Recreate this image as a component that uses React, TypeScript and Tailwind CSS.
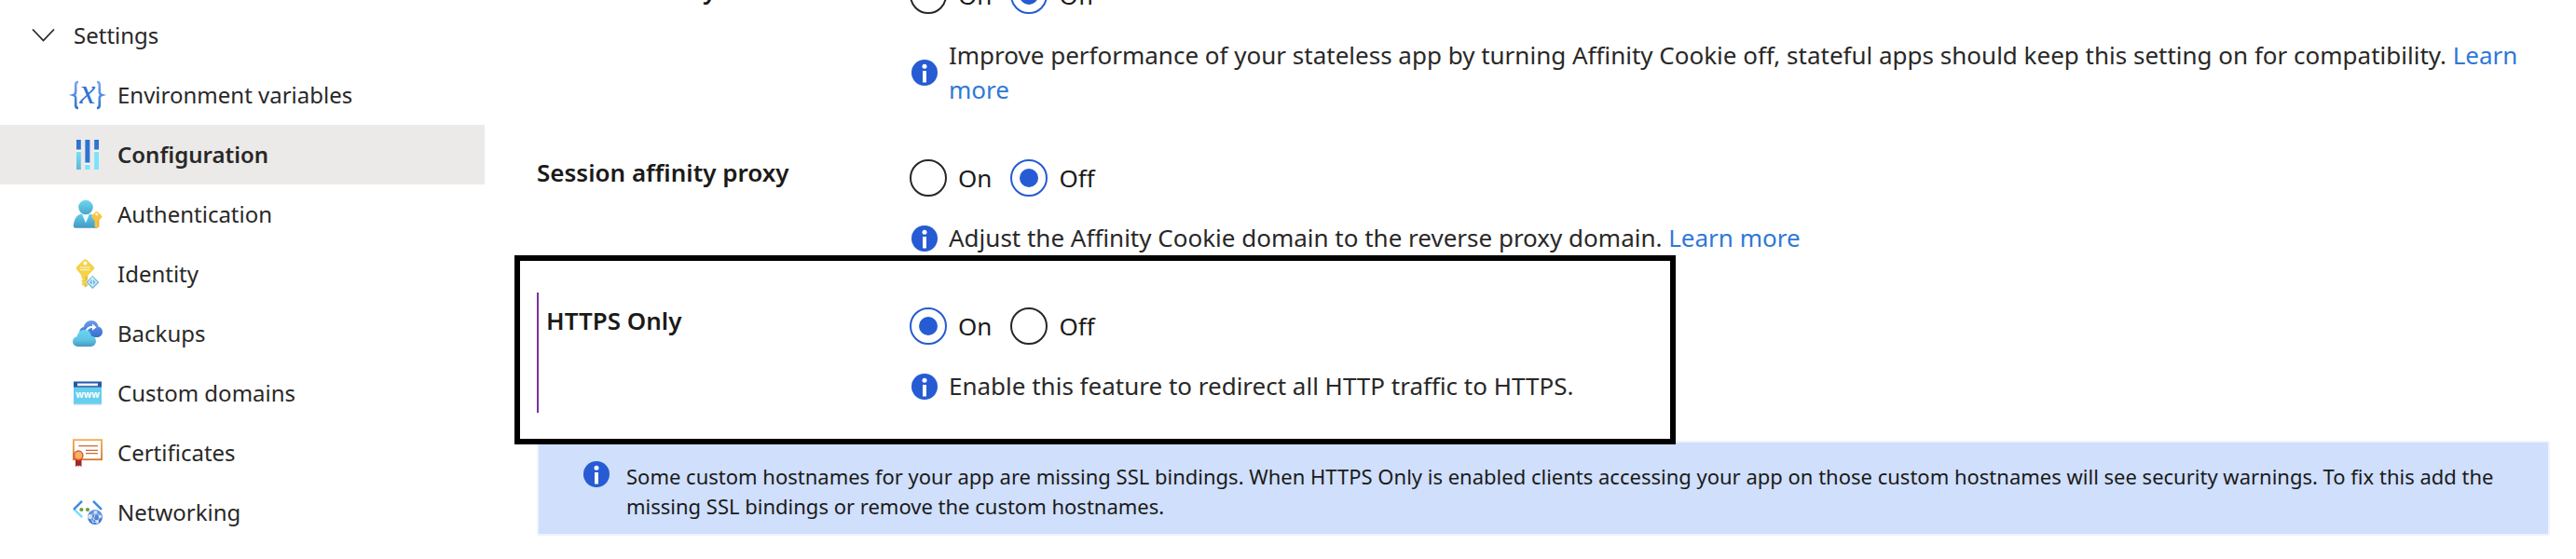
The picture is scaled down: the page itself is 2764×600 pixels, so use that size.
import type { ReactNode } from "react";

function EnvironmentIcon() {
  return (
    <svg viewBox="0 0 32 32" className="size-8 shrink-0 overflow-visible" aria-hidden="true">
      <defs>
        <linearGradient id="env-g" x1="0" y1="0" x2="0" y2="1">
          <stop offset="0" stopColor="#7ba7f0" />
          <stop offset="1" stopColor="#2f74d0" />
        </linearGradient>
      </defs>
      <g fill="none" stroke="url(#env-g)" strokeWidth="2.6">
        <path d="M6 2C3.600 2 3.200 3 3.200 5v7.500c0 2-.6 3-2.400 3.500 1.800.5 2.400 1.500 2.400 3.500V27c0 2 .4 3 2.800 3" />
        <path d="M26 2c2.400 0 2.800 1 2.800 3v7.500c0 2 .6 3 2.400 3.500-1.800.5-2.400 1.500-2.400 3.500V27c0 2-.4 3-2.800 3" />
      </g>
      <text x="16" y="25" textAnchor="middle" fill="#2f74d0" className="font-['Liberation_Serif',serif] text-[38px] italic">x</text>
    </svg>
  );
}

function ConfigurationIcon() {
  return (
    <svg viewBox="0 0 32 32" className="size-8 shrink-0" aria-hidden="true">
      <defs>
        <linearGradient id="cfg-g" x1="0" y1="0" x2="0" y2="1">
          <stop offset="0" stopColor="#76dff8" />
          <stop offset="1" stopColor="#5fb6d4" />
        </linearGradient>
      </defs>
      <path fill="#2f74cf" d="M4 0h4.800v10.700H4zM13.400 0h5v24.700h-5zM23.200 0H28v10.700h-4.800z" />
      <path fill="url(#cfg-g)" d="M4 13h4.800v19H4z" />
      <path fill="#7ae2fb" d="M13.400 27h5v5h-5zM23.200 13H28v19h-4.800z" />
      <path fill="#f7f9fb" d="M4 10.700h4.800V13H4zM23.200 10.700H28V13h-4.800zM13.400 24.700h5V27h-5z" />
    </svg>
  );
}

function AuthenticationIcon() {
  return (
    <svg viewBox="0 0 32 32" className="size-8 shrink-0" aria-hidden="true">
      <defs>
        <linearGradient id="auth-b" x1="0" y1="0" x2="0" y2="1">
          <stop offset="0" stopColor="#63cce9" />
          <stop offset="1" stopColor="#4499c4" />
        </linearGradient>
        <linearGradient id="auth-h" x1="0" y1="0" x2="0" y2="1">
          <stop offset="0" stopColor="#6fd8f2" />
          <stop offset="1" stopColor="#48a4cc" />
        </linearGradient>
      </defs>
      <path fill="url(#auth-b)" d="M3 30.700c-1.600 0-2.400-1-2.200-2.600C1.700 21 4.500 15.700 10 15.700h8c5.500 0 8.300 5.300 9.200 12.400.2 1.600-.7 2.600-2.200 2.600z" />
      <path fill="#eaf8fd" d="M10 15.700h8l-4 9.800z" />
      <circle cx="14" cy="8.500" r="7.800" fill="url(#auth-h)" />
      <path fill="#f9c440" d="M24.600 13.600q1.200-1 2.400 0l3.900 3.700q1 1.200 0 2.400l-2.700 3v6.600l-2.300 1.900-2.300-1.900v-6.600l-2.800-3q-1-1.200 0-2.400z" />
      <path fill="#eea634" d="M26.800 22.500h1.400v6.800l-1.400 1.200z" />
      <circle cx="25.800" cy="16" r="1.500" fill="#fff5dc" />
    </svg>
  );
}

function IdentityIcon() {
  return (
    <svg viewBox="0 0 32 32" className="size-8 shrink-0" aria-hidden="true">
      <path fill="#f5d24a" d="M12 .8q1.500-1.200 3 0l7.600 7.400q1.300 1.500 0 3l-6.300 6.600-.3 10.400-2.200 2.200-4.500-3.400 1.500-1.700-1.600-1.800 1.700-1.800-1.600-1.700V17.500L4.300 11.200q-1.200-1.500 0-3z" />
      <path fill="#f0bb3a" d="M13.400 18.500H16v9.800l-2.600 2z" />
      <circle cx="13.400" cy="4.500" r="2" fill="#fff" />
      <path stroke="#fbf0bd" strokeWidth="1.200" d="M8 9.200h10.600M8 11.700h10.600" />
      <path fill="#74b9de" stroke="#fff" strokeWidth=".8" d="m21.300 17.400 7.500 7.600-7.500 7.500-7.500-7.500z" />
      <path fill="none" stroke="#d5f1fb" strokeWidth="1.200" d="m21.300 20-4.300 5 4.300 4.200 4.300-4.200zM21.300 20v9" />
    </svg>
  );
}

function BackupsIcon() {
  return (
    <svg viewBox="0 0 32 32" className="size-8 shrink-0" aria-hidden="true">
      <defs>
        <linearGradient id="bk-1" x1="0" y1="0" x2="0" y2="1">
          <stop offset="0" stopColor="#6d9bea" />
          <stop offset="1" stopColor="#3270cf" />
        </linearGradient>
        <linearGradient id="bk-2" x1="0" y1="0" x2="0" y2="1">
          <stop offset="0" stopColor="#69d6f2" />
          <stop offset=".6" stopColor="#5fc4e4" />
          <stop offset="1" stopColor="#4598c0" />
        </linearGradient>
      </defs>
      <path fill="url(#bk-1)" d="M14 20c-4 0-6.700-2.500-6.700-5.600 0-2.800 2-5 4.600-5.400C12.700 4.800 16 2 20 2c4 0 7 2.800 7.500 6.600 2.700.4 4.500 2.800 4.500 5.600 0 3.200-2.500 5.800-5.600 5.800z" />
      <path fill="none" stroke="#fff" strokeWidth="2.200" d="M14.700 14c.6-3.600 3-5.200 7-5" />
      <path fill="#fff" d="m21 5.500 4.600 3.700-4.600 3.600z" />
      <path fill="url(#bk-2)" d="M5.600 30C2.400 30 0 27.500 0 24.600c0-2.900 2-5.100 4.700-5.400C5.200 15.200 8.300 12 12.500 12c4 0 7 2.800 7.500 6.500 2.900.2 5 2.700 5 5.600 0 3.200-2.500 5.900-5.700 5.900z" />
    </svg>
  );
}

function DomainsIcon() {
  return (
    <svg viewBox="0 0 32 32" className="size-8 shrink-0" aria-hidden="true">
      <path fill="#66cfee" d="M1 9.500h30V28H1z" />
      <path fill="#225ba8" d="M1 3.500h30v6.200H1z" />
      <path fill="#f3f3f3" d="M5 5.500h22v2.700H5z" />
      <path fill="#b9d8e6" d="M1 27.400h30v1.200H1z" />
      <text x="16" y="21" textAnchor="middle" fill="#fff" className="font-['Open_Sans',sans-serif] text-[10px] font-bold">www</text>
    </svg>
  );
}

function CertificatesIcon() {
  return (
    <svg viewBox="0 0 32 32" className="size-8 shrink-0" aria-hidden="true">
      <defs>
        <linearGradient id="ct-g" x1="0" y1="0" x2="0" y2="1">
          <stop offset="0" stopColor="#f2a94a" />
          <stop offset="1" stopColor="#d27a2c" />
        </linearGradient>
      </defs>
      <rect x=".9" y="2.200" width="30.200" height="21" fill="#fff" stroke="url(#ct-g)" strokeWidth="1.800" />
      <path stroke="#c96a33" strokeWidth="1.100" d="M6.300 8.600H27M14 13.400h13M14 16.600h13" />
      <path fill="#a32722" d="M3 22.500h6.500V31l-2.300-1.600L6.200 31l-1-1.600L3 31z" />
      <circle cx="6.200" cy="18.800" r="4.700" fill="#f5b45c" stroke="#e2533d" strokeWidth="1.500" />
    </svg>
  );
}

function NetworkingIcon() {
  return (
    <svg viewBox="0 0 32 32" className="size-8 shrink-0" aria-hidden="true">
      <defs>
        <linearGradient id="nw-g" x1="0" y1="0" x2="0" y2="1">
          <stop offset="0" stopColor="#6a9ce8" />
          <stop offset="1" stopColor="#2f6fcf" />
        </linearGradient>
      </defs>
      <g fill="none" strokeWidth="2.500">
        <path stroke="#79e0fb" d="m1.200 12.300 9 8.900" />
        <path stroke="#3f8bdc" d="m10 3.800-9 9M22 3.800l9 9" />
      </g>
      <circle cx="9.400" cy="13" r="2.100" fill="#6d9d3a" />
      <circle cx="16" cy="13" r="2.100" fill="#6d9d3a" />
      <circle cx="24" cy="21" r="8" fill="url(#nw-g)" />
      <path fill="none" stroke="#dfe6f2" strokeWidth=".8" d="m18.500 20 6-4 5 4-3 6-5 1-3-7 8 6M24.500 16l-3 11" />
      <g fill="#dcdfe4">
        <circle cx="24.500" cy="15.800" r="1.900" />
        <circle cx="18.600" cy="20.500" r="2.500" />
        <circle cx="29.400" cy="20.400" r="1.800" />
        <circle cx="26.200" cy="26" r="1.900" />
      </g>
    </svg>
  );
}

function InfoIcon() {
  return (
    <svg viewBox="0 0 28 28" className="size-7 shrink-0" aria-hidden="true">
      <circle cx="14" cy="14" r="14" fill="#265bd3" />
      <circle cx="14" cy="7.200" r="2.500" fill="#fff" />
      <path fill="#fff" d="M12 12h4v12.500h-4z" />
    </svg>
  );
}

const navItems: { label: string; icon: ReactNode; active?: boolean }[] = [
  { label: "Environment variables", icon: <EnvironmentIcon /> },
  { label: "Configuration", icon: <ConfigurationIcon />, active: true },
  { label: "Authentication", icon: <AuthenticationIcon /> },
  { label: "Identity", icon: <IdentityIcon /> },
  { label: "Backups", icon: <BackupsIcon /> },
  { label: "Custom domains", icon: <DomainsIcon /> },
  { label: "Certificates", icon: <CertificatesIcon /> },
  { label: "Networking", icon: <NetworkingIcon /> },
];

function Radio({ name, label, checked }: { name: string; label: string; checked: boolean }) {
  return (
    <label className="flex h-10 items-center gap-3">
      <input
        type="radio"
        name={name}
        defaultChecked={checked}
        className="grid size-10 shrink-0 appearance-none place-content-center rounded-full border-2 border-[#292827] bg-white before:size-5 before:rounded-full before:content-[''] checked:border-[#265bd3] checked:before:bg-[#265bd3]"
      />
      {label}
    </label>
  );
}

function Setting({ id, label, value, children }: { id: string; label: string; value: "On" | "Off"; children: ReactNode }) {
  return (
    <div role="radiogroup" aria-labelledby={id} className="flex flex-1 items-start">
      <h3 id={id} className="flex-1 leading-7 font-semibold text-[#1b1a19]">{label}</h3>
      <div className="flex w-[1760px] flex-col gap-[26px]">
        <div className="flex gap-5 text-[#1b1a19]">
          <Radio name={id} label="On" checked={value === "On"} />
          <Radio name={id} label="Off" checked={value === "Off"} />
        </div>
        <div className="flex items-center gap-3 pl-0.5">
          <InfoIcon />
          <p>{children}</p>
        </div>
      </div>
    </div>
  );
}

function LearnMore() {
  return <a href="#learn-more" className="text-[#2f78d6]">Learn more</a>;
}

export default function App() {
  return (
    <div className="flex min-h-screen overflow-hidden bg-white font-['Noto_Sans','Open_Sans',sans-serif] text-[26px] leading-[37px] text-[#292827]">
      <nav aria-label="Settings" className="w-[520px] shrink-0 pt-1.5 text-2xl">
        <button type="button" aria-expanded="true" className="flex h-16 w-full items-center gap-5 pl-[34px]">
          <svg viewBox="0 0 25 16" className="h-4 w-[25px]" aria-hidden="true">
            <path d="m1 1.500 11.500 12L24 1.500" fill="none" stroke="#292827" strokeWidth="1.800" />
          </svg>
          Settings
        </button>
        <ul>
          {navItems.map((item) => (
            <li key={item.label}>
              <a
                href="#settings"
                aria-current={item.active ? "page" : undefined}
                className={
                  item.active
                    ? "flex h-16 items-center gap-4 bg-[#ebeae9] pl-[78px] font-semibold"
                    : "flex h-16 items-center gap-4 pl-[78px]"
                }
              >
                {item.icon}
                {item.label}
              </a>
            </li>
          ))}
        </ul>
      </nav>

      <main className="-mt-[25px] min-w-0 flex-1 pr-7 pl-14">
        <div className="flex flex-col gap-14">
          <Setting id="session-affinity" label="Session affinity" value="Off">
            Improve performance of your stateless app by turning Affinity Cookie off, stateful apps should keep this
            setting on for compatibility. <LearnMore />
          </Setting>
          <Setting id="affinity-proxy" label="Session affinity proxy" value="Off">
            Adjust the Affinity Cookie domain to the reverse proxy domain. <LearnMore />
          </Setting>
        </div>

        <div className="relative mt-10 flex border-l-2 border-[#7d2e9e] pt-4 pb-2.5 pl-2">
          <Setting id="https-only" label="HTTPS Only" value="On">
            Enable this feature to redirect all HTTP traffic to HTTPS.
          </Setting>
          <div className="pointer-events-none absolute -top-10 -bottom-[34px] -left-[26px] w-[1246px] border-6 border-black" />
        </div>

        <div role="status" className="mt-[30px] flex gap-[18px] rounded-xs border-2 border-[#eef3fe] bg-[#cfdffc] pt-5 pr-3 pb-3.5 pl-12 text-[22px] leading-8 text-[#1b1a19]">
          <InfoIcon />
          <p>
            Some custom hostnames for your app are missing SSL bindings. When HTTPS Only is enabled clients accessing
            your app on those custom hostnames will see security warnings. To fix this add the missing SSL bindings or
            remove the custom hostnames.
          </p>
        </div>
      </main>
    </div>
  );
}
